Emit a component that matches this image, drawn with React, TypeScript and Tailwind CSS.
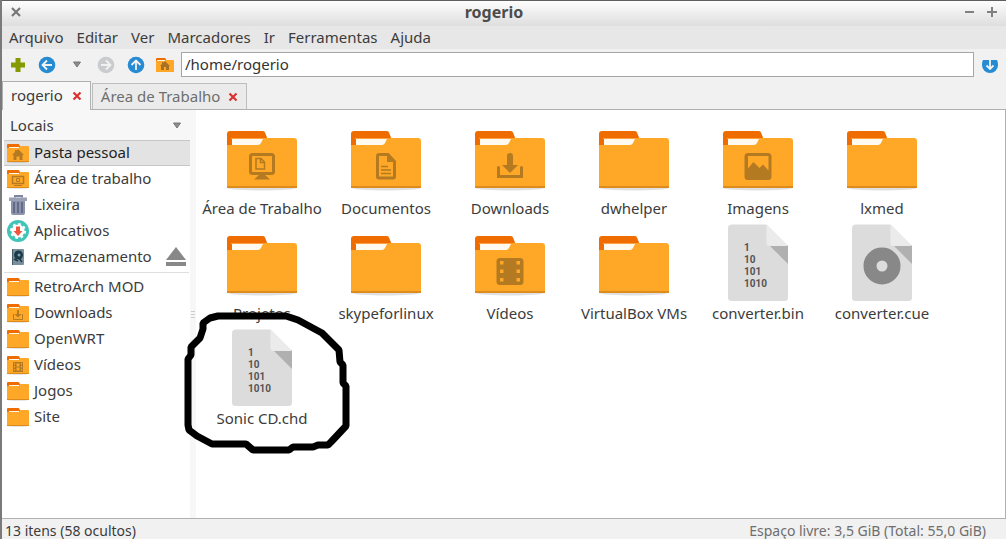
import React from "react";

type Emblem = "home" | "desktop" | "document" | "download" | "image" | "video";

const menus = ["Arquivo", "Editar", "Ver", "Marcadores", "Ir", "Ferramentas", "Ajuda"];

const bookmarks: { name: string; emblem?: Emblem }[] = [
  { name: "RetroArch MOD" },
  { name: "Downloads", emblem: "download" },
  { name: "OpenWRT" },
  { name: "Vídeos", emblem: "video" },
  { name: "Jogos" },
  { name: "Site" },
];

const files: { name: string; kind: "folder" | "binary" | "disc"; emblem?: Emblem }[] = [
  { name: "Área de Trabalho", kind: "folder", emblem: "desktop" },
  { name: "Documentos", kind: "folder", emblem: "document" },
  { name: "Downloads", kind: "folder", emblem: "download" },
  { name: "dwhelper", kind: "folder" },
  { name: "Imagens", kind: "folder", emblem: "image" },
  { name: "lxmed", kind: "folder" },
  { name: "Projetos", kind: "folder" },
  { name: "skypeforlinux", kind: "folder" },
  { name: "Vídeos", kind: "folder", emblem: "video" },
  { name: "VirtualBox VMs", kind: "folder" },
  { name: "converter.bin", kind: "binary" },
  { name: "converter.cue", kind: "disc" },
  { name: "Sonic CD.chd", kind: "binary" },
];

/* Emblems of the big folders, drawn in the 80x80 icon box */
const BigEmblem = ({ emblem }: { emblem: Emblem }) => {
  switch (emblem) {
    case "desktop":
      return (
        <g fill="none" stroke="#b37a22" strokeWidth="3">
          <rect x="28.5" y="36.5" width="23" height="19" rx="2" />
          <path d="M34 40.500h5l3.500 3.500v7H34z M38.500 40.500v4h4" strokeWidth="1.500" />
          <path d="M37 57h6l5 4.500H32z" fill="#b37a22" stroke="none" />
        </g>
      );
    case "document":
      return (
        <g fill="none" stroke="#b37a22">
          <path d="M33 36.500h9l6.500 7v15q0 1.500-1.500 1.500H33q-1.500 0-1.500-1.500V38q0-1.500 1.500-1.500z" strokeWidth="3" />
          <path d="M41 36l8 8h-8z" fill="#b37a22" stroke="none" />
          <path d="M35 48.500h7M35 52h10M35 55.500h10" strokeWidth="1.500" />
        </g>
      );
    case "download":
      return (
        <g fill="#b37a22">
          <path d="M37 38q0-3 3-3t3 3v9h5l-8 8-8-8h5z" />
          <path d="M28.500 49.500v9h23v-9" fill="none" stroke="#b37a22" strokeWidth="3" strokeLinecap="round" />
        </g>
      );
    case "image":
      return (
        <path
          fill="#b37a22"
          fillRule="evenodd"
          d="M30 35h20q3.500 0 3.500 3.500v20q0 3.500-3.500 3.500H30q-3.500 0-3.500-3.500v-20Q26.500 35 30 35zM30 38v12.500l5.500-6.500 6 6 3.500-3.500 5.500 6V38z"
        />
      );
    case "video":
      return (
        <path
          fill="#b37a22"
          fillRule="evenodd"
          d="M30 35h20q3.500 0 3.500 3.500v20q0 3.500-3.500 3.500H30q-3.500 0-3.500-3.500v-20Q26.500 35 30 35zM30 38v3.500h3.500V38zM30 46.500v3.500h3.500v-3.500zM30 55v3.500h3.500V55zM46.500 38v3.500H50V38zM46.500 46.500v3.500H50v-3.500zM46.500 55v3.500H50V55z"
        />
      );
    default:
      return null;
  }
};

const BigFolder = ({ emblem }: { emblem?: Emblem }) => (
  <svg viewBox="0 0 80 80" className="size-20" aria-hidden="true">
    <ellipse cx="40" cy="70" rx="34" ry="2.5" fill="#000" opacity="0.12" />
    <path d="M5 50V16q0-3 3-3h33q1.500 0 2 1.500L46 22v28z" fill="#ef6c00" />
    <path d="M10 21h32v15H10z" fill="#fffaf0" />
    <path d="M9 20.500h34" stroke="#ffa040" />
    <path d="M5 27h31q2 0 3-2l2-4q.500-1 2-1h29q3 0 3 3v47H5z" fill="#ffa726" />
    <path d="M5 68h70v2H5z" fill="#de8d1c" />
    {emblem && <BigEmblem emblem={emblem} />}
  </svg>
);

const Sheet = ({ children }: { children: React.ReactNode }) => (
  <svg viewBox="0 0 80 80" className="size-20" aria-hidden="true">
    <path d="M14 1.500h34.500L70 23v51.500q0 3.500-3.500 3.500h-53q-3.500 0-3.500-3.500V5q0-3.500 4-3.500z" fill="#dcdcdc" />
    <path d="M51 22l19 19V22z" fill="#b0b0b0" />
    <path d="M48.500 1.500L70 23H51.500q-3 0-3-3z" fill="#ebebeb" />
    {children}
  </svg>
);

const BinaryFile = () => (
  <Sheet>
    <g fill="#545454" fontFamily="Roboto, sans-serif" fontSize="10" fontWeight="700">
      <text x="26" y="28">1</text>
      <text x="26" y="40">10</text>
      <text x="26" y="52">101</text>
      <text x="26" y="64">1010</text>
    </g>
  </Sheet>
);

const DiscFile = () => (
  <Sheet>
    <circle cx="40" cy="43" r="12" fill="none" stroke="#888" strokeWidth="13" />
  </Sheet>
);

const SmallFolder = ({ emblem }: { emblem?: Emblem }) => (
  <svg viewBox="0 0 22 22" className="size-[22px] shrink-0" aria-hidden="true">
    <ellipse cx="11" cy="20" rx="10" ry="1" fill="#000" opacity="0.1" />
    <path d="M0 8V3q0-1 1-1h10q1 0 1.500 1L14 8z" fill="#ef6c00" />
    <path d="M0 6h11q1 0 1.500-1t1.500-1h7q1 0 1 1v15H0z" fill="#ffa726" />
    <path d="M2 5h10v1H2z" fill="#fffaf0" />
    <path d="M0 19h22v1H0z" fill="#de8d1c" />
    {emblem === "home" && <path d="M11 7l6 6h-1.500v5h-3v-3.500h-3V18h-3v-5H5l3-3V8h1.500v1z" fill="#b37a22" />}
    {emblem === "desktop" && (
      <g fill="none" stroke="#b37a22">
        <rect x="5.500" y="8.500" width="11" height="7" strokeWidth="1.500" />
        <path d="M9.500 10.500h3v3h-3zM7 17.500h8" />
      </g>
    )}
    {emblem === "download" && (
      <g fill="#b37a22">
        <path d="M10 8h2v4h2.500L11 15.500 7.500 12H10z" />
        <path d="M6.500 12v5.500h9V12" fill="none" stroke="#b37a22" />
      </g>
    )}
    {emblem === "video" && (
      <path
        fill="#b37a22"
        fillRule="evenodd"
        d="M6 8h10v10H6zM7 9v1.500h1V9zM7 12v1.500h1V12zM7 15v1.500h1V15zM14 9v1.500h1V9zM14 12v1.500h1V12zM14 15v1.500h1V15zM9.500 9.500v3h3v-3zM9.500 13.500v3h3v-3z"
      />
    )}
  </svg>
);

const TrashIcon = () => (
  <svg viewBox="0 0 22 22" className="size-[22px] shrink-0" aria-hidden="true">
    <path d="M8 3.500V2h7v1.500" fill="none" stroke="#7c86a0" strokeWidth="2" />
    <path d="M2 3.500h18V7H2z" fill="#9aa1b5" />
    <path d="M4 7h14v12q0 2-2 2H6q-2 0-2-2z" fill="#8a93aa" />
    <path d="M7 8v11M11 8v11M15 8v11" stroke="#626c88" strokeWidth="2" />
  </svg>
);

const AppsIcon = () => (
  <svg viewBox="0 0 22 22" className="size-[22px] shrink-0" aria-hidden="true">
    <circle cx="11" cy="11" r="11" fill="#40c4b8" />
    <circle cx="11" cy="11" r="6.500" fill="#fff" />
    <circle cx="11" cy="11" r="7" fill="none" stroke="#fff" strokeWidth="2" strokeDasharray="2.700 2.800" />
    <path d="M9 6.500h4V11h2.500L11 16l-4.500-5H9z" fill="#f05540" />
  </svg>
);

const DiskIcon = () => (
  <svg viewBox="0 0 22 22" className="size-[22px] shrink-0" aria-hidden="true">
    <rect x="5" y="3" width="12" height="16" rx="1" fill="#78909c" />
    <path d="M5 3h1v16H5z" fill="#455a64" />
    <circle cx="11.500" cy="9" r="4.500" fill="#1d3a46" />
    <circle cx="12" cy="9" r="1.500" fill="#78a6b8" />
    <path d="M11 11l4 5M7 13l4 2" stroke="#1d3a46" strokeWidth="1.500" />
  </svg>
);

const RoundArrow = ({ path, color }: { path: string; color: string }) => (
  <svg viewBox="0 0 18 18" className="size-[18px]" aria-hidden="true">
    <circle cx="9" cy="9" r="8.300" fill={color} />
    <path d={path} fill="none" stroke="#f1f1f1" strokeWidth="1.800" />
  </svg>
);

const DownTriangle = () => (
  <svg viewBox="0 0 10 7" className="h-[7px] w-[10px]" aria-hidden="true">
    <path d="M1.500 1h7L5 6z" fill="#8c8c8c" stroke="#777" />
  </svg>
);

const CloseCross = () => (
  <svg viewBox="0 0 10 10" className="size-[10px]" aria-hidden="true">
    <path d="M1.500 1.500l7 7M8.500 1.500l-7 7" stroke="#dc322f" strokeWidth="2.200" />
  </svg>
);

const PlaceRow = ({
  icon,
  name,
  selected,
  children,
}: {
  icon: React.ReactNode;
  name: string;
  selected?: boolean;
  children?: React.ReactNode;
}) => (
  <li
    className={
      selected
        ? "flex h-[26px] items-center border-y border-[#c8c8c8] bg-[#e3e3e3] pr-1 pl-[3px] text-[#222]"
        : "flex h-[26px] items-center pr-1 pl-[3px]"
    }
  >
    <button className="flex flex-1 items-center gap-[5px] text-left whitespace-nowrap">
      {icon}
      <span className="pb-[2px]">{name}</span>
    </button>
    {children}
  </li>
);

const TitleBar = () => (
  <header className="flex h-[26px] items-center border-t border-[#5e5e5e] bg-linear-to-b from-[#fdfdfd] to-[#dedede] px-[9px] pb-[3px]">
    <button aria-label="Fechar" className="flex w-5 justify-start">
      <svg viewBox="0 0 10 10" className="size-[10px]">
        <path d="M1 1l8 8M9 1l-8 8" stroke="#777" strokeWidth="2.200" />
      </svg>
    </button>
    <h1 className="flex-1 text-center text-[16px] font-bold text-[#4c4c4c]">rogerio</h1>
    <div className="flex items-center gap-3 pl-2">
      <button aria-label="Minimizar">
        <svg viewBox="0 0 10 10" className="size-[10px]">
          <path d="M0 5h9" stroke="#808080" strokeWidth="2" />
        </svg>
      </button>
      <button aria-label="Maximizar">
        <svg viewBox="0 0 10 10" className="size-[10px]">
          <path d="M0 5h10M5 0v10" stroke="#808080" strokeWidth="2" />
        </svg>
      </button>
    </div>
  </header>
);

const Toolbar = () => (
  <div className="flex h-8 items-center px-[7px] pb-px">
    <div className="flex w-[172px] items-center justify-between pr-[7px]">
      <button aria-label="Nova aba">
        <svg viewBox="0 0 18 18" className="size-[18px]">
          <path d="M9 2v14M2 9h14" stroke="#859900" strokeWidth="5" />
        </svg>
      </button>
      <button aria-label="Voltar">
        <RoundArrow color="#268bd2" path="M14 9H5M9 4.500L4.500 9 9 13.500" />
      </button>
      <button aria-label="Histórico" className="flex w-[18px] justify-center">
        <DownTriangle />
      </button>
      <button aria-label="Avançar">
        <RoundArrow color="#c9cccf" path="M4 9h9M9 4.500l4.500 4.500L9 13.500" />
      </button>
      <button aria-label="Subir">
        <RoundArrow color="#268bd2" path="M9 14V5M4.500 9L9 4.500 13.500 9" />
      </button>
      <button aria-label="Pasta pessoal">
        <svg viewBox="0 0 18 18" className="size-[18px]">
          <path d="M0 6V3q0-1 1-1h8l2 3z" fill="#ef6c00" />
          <path d="M0 5h8l2-1h7q1 0 1 1v11H0z" fill="#ffa726" />
          <path d="M1 4h8v1H1z" fill="#fff3dc" />
          <path d="M9 5l5 5h-1v4h-3v-3H8v3H5v-4H4l2-2V6h1v1z" fill="#a87222" />
        </svg>
      </button>
    </div>
    <input
      aria-label="Local"
      defaultValue="/home/rogerio"
      className="h-[25px] min-w-0 flex-1 border border-[#a6a6a6] bg-white px-[3px] pb-[2px] text-[#333] outline-none"
    />
    <button aria-label="Ir para" className="ml-[7px]">
      <svg viewBox="0 0 18 18" className="size-[18px]">
        <path d="M2 4h14q1 1.500 1 5a8 8 0 0 1-16 0q0-3.500 1-5z" fill="#268bd2" />
        <path d="M9 4v9M5.500 9.500L9 13l3.500-3.500" fill="none" stroke="#f1f1f1" strokeWidth="1.800" />
      </svg>
    </button>
  </div>
);

const Tabs = () => (
  <div className="flex h-[29px] items-end gap-px border-b border-[#b0b0b0]">
    <div className="-mb-px flex h-[29px] items-center gap-[9px] border border-b-0 border-[#b0b0b0] bg-[#f7f7f7] px-2">
      <button className="pb-[2px]">rogerio</button>
      <button aria-label="Fechar rogerio">
        <CloseCross />
      </button>
    </div>
    <div className="flex h-[26px] items-center gap-2 border border-b-0 border-[#bdbdbd] bg-[#ebebeb] pr-2 pl-2 text-[#6e6e6e]">
      <button className="pb-[2px]">Área de Trabalho</button>
      <button aria-label="Fechar Área de Trabalho">
        <CloseCross />
      </button>
    </div>
  </div>
);

const Sidebar = () => (
  <aside className="flex w-[187px] shrink-0 flex-col">
    <button className="flex h-[30px] items-center justify-between bg-[#f7f7f7] pr-2 pl-[7px]">
      Locais
      <DownTriangle />
    </button>
    <ul className="pl-px">
      <PlaceRow selected icon={<SmallFolder emblem="home" />} name="Pasta pessoal" />
      <PlaceRow icon={<SmallFolder emblem="desktop" />} name="Área de trabalho" />
      <PlaceRow icon={<TrashIcon />} name="Lixeira" />
      <PlaceRow icon={<AppsIcon />} name="Aplicativos" />
      <PlaceRow icon={<DiskIcon />} name="Armazenamento">
        <button aria-label="Ejetar">
          <svg viewBox="0 0 20 20" className="size-5">
            <path d="M10 0l10 13H0zM0 15h20v4H0z" fill="#888" />
          </svg>
        </button>
      </PlaceRow>
    </ul>
    <hr className="mx-px mt-[2px] mb-px border-[#dedede]" />
    <ul className="pl-px">
      {bookmarks.map((place) => (
        <PlaceRow key={place.name} icon={<SmallFolder emblem={place.emblem} />} name={place.name} />
      ))}
    </ul>
  </aside>
);

const FileGrid = () => (
  <main className="grid flex-1 grid-cols-[repeat(auto-fill,124px)] content-start border-r border-[#b0b0b0] pt-2 pl-1">
    {files.map((file) => (
      <button key={file.name} className="flex h-[105px] flex-col items-center whitespace-nowrap">
        {file.kind === "folder" && <BigFolder emblem={file.emblem} />}
        {file.kind === "binary" && <BinaryFile />}
        {file.kind === "disc" && <DiscFile />}
        <span>{file.name}</span>
      </button>
    ))}
  </main>
);

/* Hand-drawn loop around the last file */
const Marker = () => (
  <svg
    viewBox="0 0 180 160"
    className="pointer-events-none absolute top-[300px] left-[178px] h-[160px] w-[180px]"
    aria-hidden="true"
  >
    <path
      d="M38 16h68l12 4 24 13 17 17 1 12 3 3v18l3 3v40l-15 16-3 3h-10l-5 2h-20l-4 3H73l-7-6H32l-15-8-8-6-1-5V59l3-4V47l9-9 3-9v-6l7-5z"
      fill="none"
      stroke="#000"
      strokeWidth="7"
      strokeLinejoin="bevel"
    />
  </svg>
);

export default function App() {
  return (
    <div className="relative flex min-h-screen flex-col border-l-2 border-[#7a7a7a] bg-[#f1f1f1] font-['Noto_Sans',sans-serif] text-[15px] leading-5 text-[#3c3c3c]">
      <TitleBar />
      <nav className="flex h-[23px] items-center gap-[13px] bg-[#e7e7e7] pb-[2px] pl-[7px]">
        {menus.map((menu) => (
          <button key={menu}>{menu}</button>
        ))}
      </nav>
      <Toolbar />
      <Tabs />
      <div className="flex flex-1 bg-white pl-px">
        <Sidebar />
        <div className="flex w-[6px] shrink-0 flex-col items-center justify-center gap-[2px] bg-[#f7f7f7]">
          <span className="h-px w-1 bg-[#ccc]" />
          <span className="h-px w-1 bg-[#ccc]" />
          <span className="h-px w-1 bg-[#ccc]" />
        </div>
        <FileGrid />
      </div>
      <footer className="flex h-[21px] items-center justify-between border-t border-[#b0b0b0] pt-1 pr-[20px] pl-[3px] text-[14px]">
        <span>13 itens (58 ocultos)</span>
        <span className="text-[#6e6e6e]">Espaço livre: 3,5 GiB (Total: 55,0 GiB)</span>
      </footer>
      <Marker />
    </div>
  );
}
